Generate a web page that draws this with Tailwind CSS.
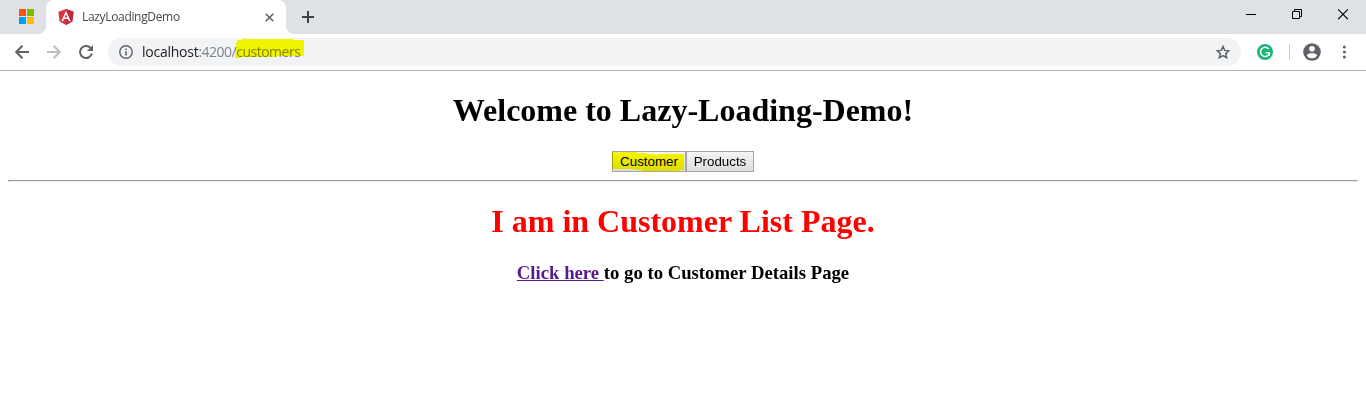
<!DOCTYPE html>
<html lang="en">
<head>
<meta charset="utf-8">
<title>LazyLoadingDemo</title>
<script src="https://cdn.jsdelivr.net/npm/@tailwindcss/browser@4"></script>
</head>
<body class="h-[415px] overflow-hidden bg-white text-black">
<!-- Tab strip -->
<header class="flex h-[34px] bg-[#dee1e6]">
  <div class="flex w-[46px] shrink-0 justify-end rounded-br-[8px] pt-[9px] pr-3">
    <svg class="size-[15px]" viewBox="0 0 15 15" shape-rendering="crispEdges"><path fill="#f65314" d="M0 0h7v7H0z"/><path fill="#7cbb00" d="M8 0h7v7H8z"/><path fill="#00a1f1" d="M0 8h7v7H0z"/><path fill="#ffbb00" d="M8 8h7v7H8z"/></svg>
  </div>
  <div class="relative flex w-[240px] shrink-0 items-center rounded-t-[8px] bg-white pl-3">
    <svg class="absolute bottom-0 -left-2 size-2" viewBox="0 0 8 8"><path fill="#fff" d="M8 0v8H0A8 8 0 0 0 8 0z"/></svg>
    <svg class="absolute -right-2 bottom-0 size-2" viewBox="0 0 8 8"><path fill="#fff" d="M0 0v8h8A8 8 0 0 1 0 0z"/></svg>
    <svg class="h-4 w-4" viewBox="0 0 16 16"><path fill="#dd3340" d="M8 0l7.6 2.7-1.2 9.9L8 16l-6.400-3.400L.4 2.700z"/><path fill="#b92b38" d="M8 0l7.600 2.700-1.200 9.900L8 16z"/><path fill="#fff" fill-rule="evenodd" d="M8 1.800l4.700 10.400h-1.800L10 9.900H6l-.9 2.300H3.300zM8 5.200L6.600 8.500h2.800z"/></svg>
    <span class="ml-2 w-[183px] font-['Open_Sans','Noto_Sans',sans-serif] text-[12px] leading-4 tracking-[-0.33px] text-[#45494d]">LazyLoadingDemo</span>
    <svg class="size-[9px]" viewBox="0 0 9 9"><path stroke="#5f6368" stroke-width="1.6" d="M.7.700l7.600 7.600M8.300.700L.7 8.300"/></svg>
  </div>
  <svg class="mt-[11px] ml-4 size-3" viewBox="0 0 12 12"><path stroke="#3c4043" stroke-width="2" d="M6 0v12M0 6h12"/></svg>
  <div class="ml-auto flex pt-[9px] pr-[18px]">
    <svg class="mr-9 h-[11px] w-[10px]" viewBox="0 0 10 11"><path fill="#000" d="M0 5h10v1H0z"/></svg>
    <svg class="mr-9 h-[11px] w-[10px]" viewBox="0 0 10 11"><path fill="none" stroke="#000" d="M.5 2.500h7v7h-7zM2.500 2.500v-2h7v7h-2"/></svg>
    <svg class="h-[11px] w-[10px]" viewBox="0 0 10 11"><path stroke="#000" stroke-width="1.100" d="M0 .3l10 10M10 .3l-10 10"/></svg>
  </div>
</header>
<!-- Toolbar -->
<div class="flex h-[37px] items-center border-b border-[#b3b3b3] bg-white pl-[15px]">
  <svg class="size-[14px]" viewBox="0 0 14 14"><path fill="none" stroke="#5f6368" stroke-width="2" d="M14 7H1.500M7.500.700L1.200 7l6.300 6.300"/></svg>
  <svg class="ml-[18px] size-[14px]" viewBox="0 0 14 14"><path fill="none" stroke="#bdbfc1" stroke-width="2" d="M0 7h12.500M6.500.700L12.800 7l-6.300 6.300"/></svg>
  <svg class="ml-[18px] size-[14px]" viewBox="0 0 14 14"><path fill="none" stroke="#5f6368" stroke-width="2" d="M12.900 8.600A6 6 0 1 1 11.500 2.900"/><path fill="#5f6368" d="M14 0v6H8z"/></svg>
  <div class="ml-[15px] flex h-7 w-[1133px] items-center rounded-full bg-[#f1f3f4] pr-[11px] pl-[11px]">
    <svg class="size-[14px]" viewBox="0 0 14 14"><circle cx="7" cy="7" r="6.200" fill="none" stroke="#5f6368" stroke-width="1.400"/><path fill="#5f6368" d="M6.200 6.200h1.600v4.300H6.200zM6.200 3.400h1.600V5H6.200z"/></svg>
    <span class="relative ml-[9px] font-['Open_Sans','Noto_Sans',sans-serif] text-[14px] leading-5 tracking-[-0.25px] text-[#202124]">localhost<span class="tracking-[-0.5px] text-[#80868b]">:4200/customers</span>
      <svg class="absolute -top-[3px] left-[93px] h-[20px] w-[69px] mix-blend-multiply" viewBox="0 0 69 20"><path fill="#ffff00" d="M2 1h5V0h51v1h11v16H41v1H6v1H0V8h1V3h1z"/></svg>
    </span>
    <svg class="ml-auto size-[14px]" viewBox="0 0 14 14"><path fill="none" stroke="#5f6368" stroke-width="1.500" d="M7 1.500l1.700 3.900 4.200.400-3.200 2.800 1 4.100L7 10.500l-3.700 2.200 1-4.100L1.100 5.800l4.200-.4z"/></svg>
  </div>
  <svg class="ml-4 size-4" viewBox="0 0 16 16"><circle cx="8" cy="8" r="8" fill="#1cb674"/><path fill="none" stroke="#fff" stroke-width="1.500" d="M11.700 5A4.600 4.600 0 1 0 12 10.300M12.200 12V8.700H8.500"/></svg>
  <i class="ml-4 h-4 w-px bg-[#cccfd2]"></i>
  <svg class="ml-[13px] size-[18px]" viewBox="0 0 18 18"><circle cx="9" cy="9" r="8.800" fill="#5f6368"/><circle cx="9" cy="5.800" r="2.800" fill="#fff"/><path fill="#fff" d="M3.600 12.400C4.500 10.800 7 10.200 9 10.200s4.500.6 5.400 2.200A6.500 6.500 0 0 1 9 15.200a6.500 6.500 0 0 1-5.400-2.800z"/></svg>
  <svg class="ml-[21px] h-[14px] w-1" viewBox="0 0 4 14"><g fill="#5f6368"><circle cx="2.400" cy="2" r="1.500"/><circle cx="2.400" cy="7" r="1.500"/><circle cx="2.400" cy="12" r="1.500"/></g></svg>
</div>
<!-- Page -->
<main class="px-2 text-center font-['Liberation_Serif',serif]">
  <h1 class="pt-[21px] text-[32px] leading-[37px] font-bold">Welcome to Lazy-Loading-Demo!</h1>
  <div class="mt-[22px] flex h-[21px] justify-center font-['Liberation_Sans',sans-serif] text-[13.333px] leading-[19px]">
    <button class="relative w-[74px] border border-[#a6a6a6] bg-linear-to-b from-[#f5f5f5] to-[#dddddd]">Customer
      <svg class="absolute -top-px -left-px h-[21px] w-[74px] mix-blend-multiply" viewBox="0 0 74 21"><path fill="#ffff00" d="M0 1h6v1h2V1h17v1h10v1h8v1h3V3h26v16h-5v1H30v-1h-7v-1H0z"/></svg>
    </button>
    <button class="w-[68px] border border-[#a6a6a6] bg-linear-to-b from-[#f5f5f5] to-[#dddddd]">Products</button>
  </div>
  <hr class="mt-2 h-[2px] border border-[#eeeeee] border-t-[#9a9a9a] border-l-[#9a9a9a]">
  <h1 class="mt-[21px] text-[32px] leading-[37px] font-bold text-[#ff0000]">I am in Customer List Page.</h1>
  <h3 class="mt-[22px] text-[18.72px] leading-[22px] font-bold"><a class="text-[#551a8b] underline">Click here </a>to go to Customer Details Page</h3>
</main>
</body>
</html>
